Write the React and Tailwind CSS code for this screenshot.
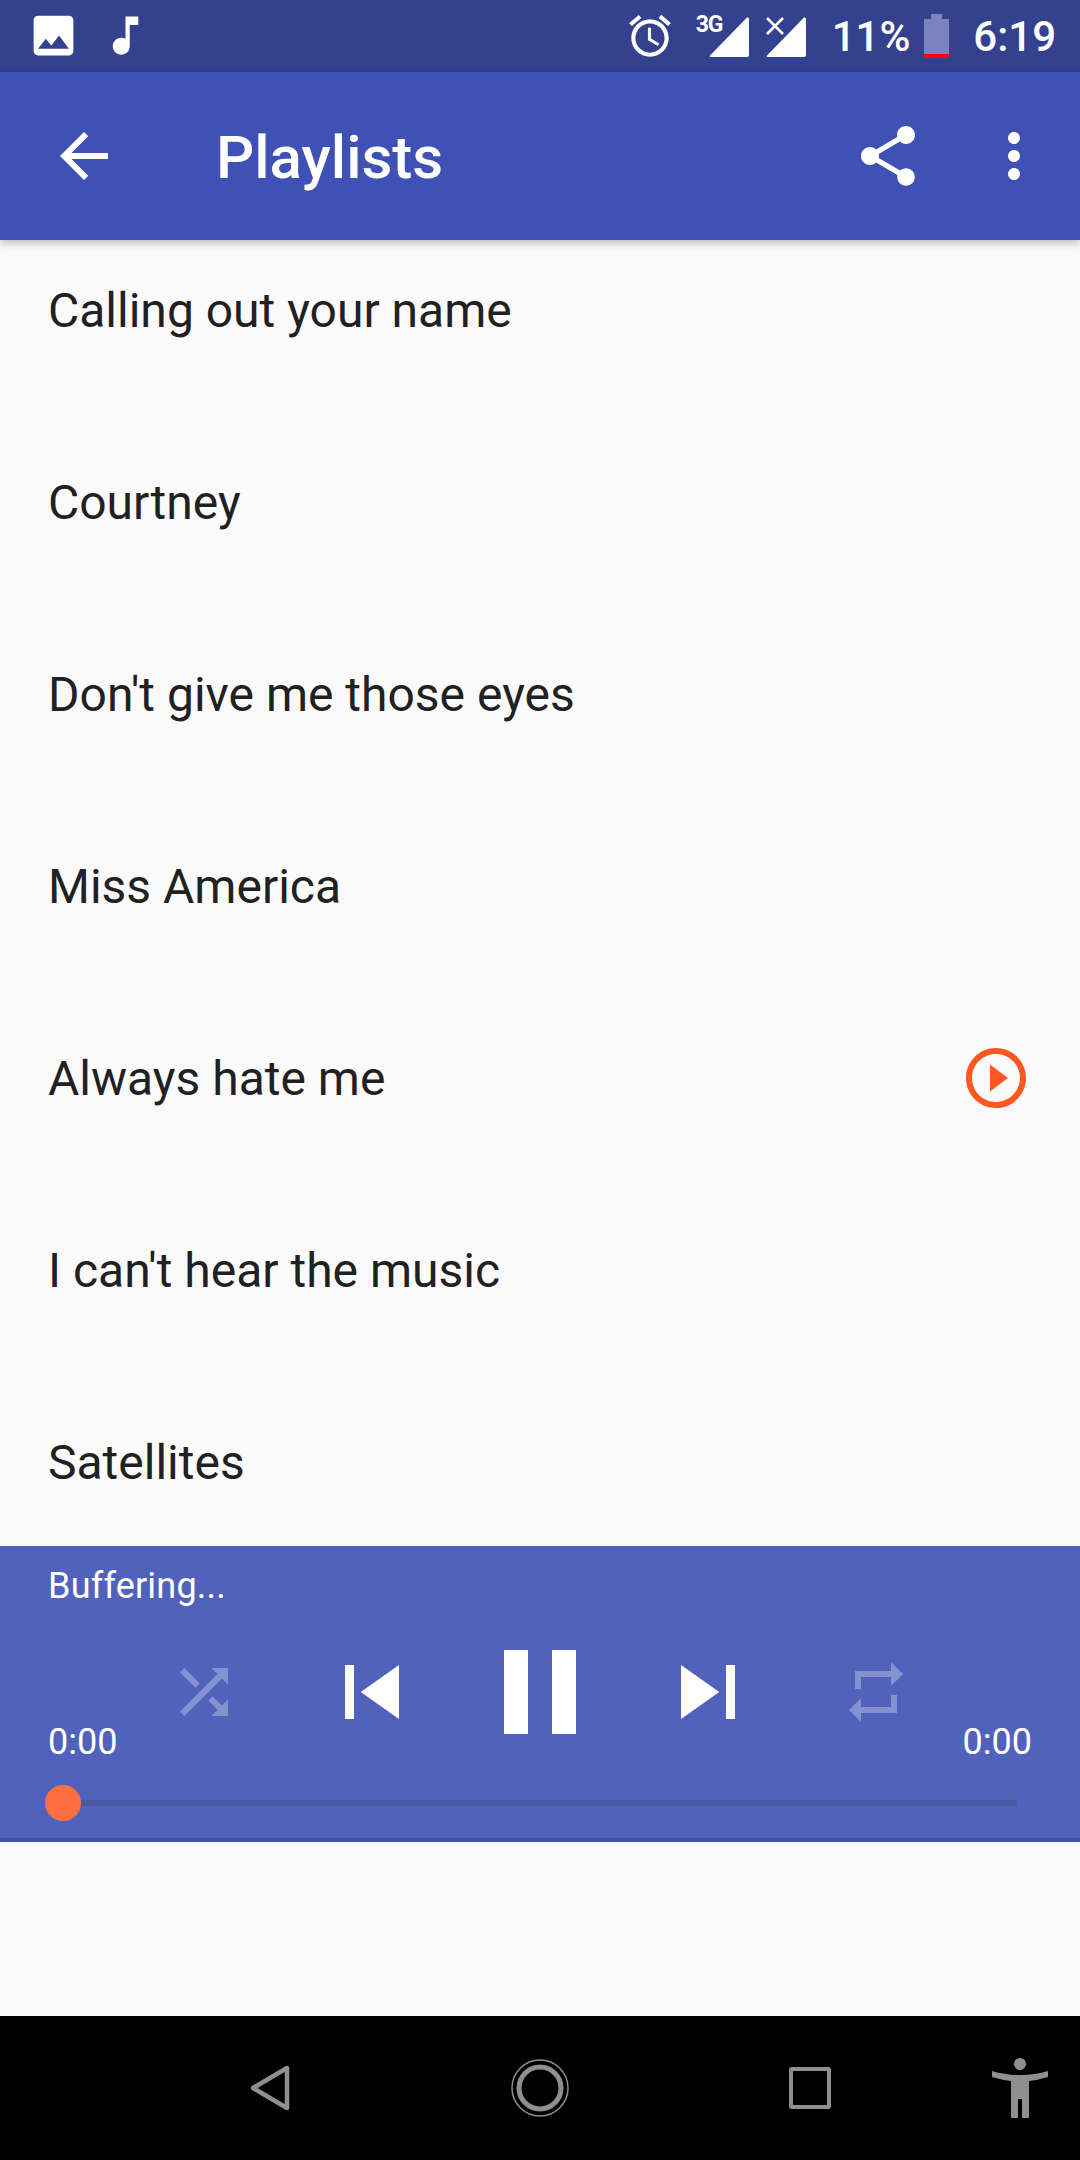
const songs = [
  "Calling out your name",
  "Courtney",
  "Don't give me those eyes",
  "Miss America",
  "Always hate me",
  "I can't hear the music",
  "Satellites",
];

// material icon paths
const paths = {
  photo: "M21 19V5c0-1.1-.9-2-2-2H5c-1.1 0-2 .9-2 2v14c0 1.1.9 2 2 2h14c1.1 0 2-.9 2-2zM8.5 13.5l2.5 3.01L14.5 12l4.5 6H5l3.5-4.5z",
  note: "M12 3v10.55c-.59-.34-1.27-.55-2-.55-2.21 0-4 1.79-4 4s1.79 4 4 4 4-1.79 4-4V7h4V3h-6z",
  alarm: "M22 5.72l-4.6-3.86-1.29 1.53 4.6 3.86L22 5.72zM7.88 3.39L6.6 1.86 2 5.71l1.29 1.53 4.59-3.85zM12.5 8H11v6l4.75 2.85.75-1.23-4-2.37V8zM12 4c-4.97 0-9 4.03-9 9s4.03 9 9 9 9-4.03 9-9-4.03-9-9-9zm0 16c-3.87 0-7-3.13-7-7s3.13-7 7-7 7 3.13 7 7-3.13 7-7 7z",
  back: "M20 11H7.83l5.59-5.59L12 4l-8 8 8 8 1.41-1.41L7.83 13H20v-2z",
  share: "M18 16.08c-.76 0-1.44.3-1.96.77L8.91 12.7c.05-.23.09-.46.09-.7s-.04-.47-.09-.7l7.05-4.11c.54.5 1.25.81 2.04.81 1.66 0 3-1.34 3-3s-1.34-3-3-3-3 1.34-3 3c0 .24.04.47.09.7L8.04 9.81C7.5 9.31 6.79 9 6 9c-1.66 0-3 1.34-3 3s1.34 3 3 3c.79 0 1.5-.31 2.04-.81l7.12 4.16c-.05.21-.08.43-.08.65 0 1.61 1.31 2.92 2.92 2.92 1.61 0 2.92-1.31 2.92-2.92s-1.31-2.92-2.92-2.92z",
  more: "M12 8c1.1 0 2-.9 2-2s-.9-2-2-2-2 .9-2 2 .9 2 2 2zm0 2c-1.1 0-2 .9-2 2s.9 2 2 2 2-.9 2-2-.9-2-2-2zm0 6c-1.1 0-2 .9-2 2s.9 2 2 2 2-.9 2-2-.9-2-2-2z",
  playOutline: "M10 16.5l6-4.5-6-4.5v9zM12 2C6.48 2 2 6.48 2 12s4.48 10 10 10 10-4.48 10-10S17.52 2 12 2zm0 18c-4.41 0-8-3.59-8-8s3.59-8 8-8 8 3.59 8 8-3.59 8-8 8z",
  shuffle: "M10.59 9.17L5.41 4 4 5.41l5.17 5.17 1.42-1.41zM14.5 4l2.04 2.04L4 18.59 5.41 20 17.96 7.46 20 9.5V4h-5.5zm.33 9.41l-1.41 1.41 3.13 3.13L14.5 20H20v-5.5l-2.04 2.04-3.13-3.13z",
  prev: "M6 6h2v12H6zm3.5 6l8.5 6V6z",
  pause: "M6 19h4V5H6v14zm8-14v14h4V5h-4z",
  next: "M6 18l8.5-6L6 6v12zM16 6v12h2V6h-2z",
  repeat: "M7 7h10v3l4-4-4-4v3H5v6h2V7zm10 10H7v-3l-4 4 4 4v-3h12v-6h-2v4z",
};

const Icon = ({ d, className }) => (
  <svg viewBox="0 0 24 24" fill="currentColor" className={className}>
    <path d={d} />
  </svg>
);

const Signal = () => (
  <svg viewBox="0 0 40 40" fill="white" className="w-10 h-10">
    <path d="M38 0.5 Q40 0 40 2 V38 Q40 40 38 40 H2 Q0 40 1 38.5 Z" />
  </svg>
);

const StatusBar = () => (
  <div className="h-[72px] bg-[#34418f] flex items-center text-white shrink-0">
    <Icon d={paths.photo} className="w-[53px] h-[53px] ml-[27px] -mt-[1px]" />
    <Icon d={paths.note} className="w-[51px] h-[51px] ml-[20px] -mt-[1px]" />
    <div className="flex-1" />
    <Icon d={paths.alarm} className="w-[50px] h-[50px] -mt-[1px]" />
    <div className="relative ml-[34px] mt-[2px]">
      <Signal />
      <span className="absolute -left-[13px] -top-[5px] text-[23px] leading-[26px] font-bold tracking-[-1px]">3G</span>
    </div>
    <div className="relative ml-[17px] mt-[2px]">
      <Signal />
      <svg viewBox="0 0 18 18" className="absolute left-0 top-0 w-[18px] h-[18px]" stroke="white" strokeWidth="2.5">
        <path d="M1 1 L17 17 M17 1 L1 17" />
      </svg>
    </div>
    <span className="ml-[26px] mt-[2px] text-[42px] leading-none font-medium">11%</span>
    <svg viewBox="0 0 25 44" className="w-[25px] h-[44px] ml-[14px]">
      <path d="M7 0 H18 V5 H25 V44 H0 V5 H7 Z" fill="#7a83bd" />
      <rect x="0" y="40" width="25" height="4" fill="#ff0000" />
    </svg>
    <span className="ml-[24px] mr-[24px] mt-[2px] text-[42px] leading-none font-medium">6:19</span>
  </div>
);

const AppBar = () => (
  <div className="relative z-10 h-[168px] bg-[#3f51b5] flex items-center text-white shrink-0 shadow-[0_3px_8px_rgba(0,0,0,0.25)]">
    <Icon d={paths.back} className="w-[72px] h-[72px] ml-[48px]" />
    <h1 className="ml-[96px] pt-[4px] flex-1 text-[60px] leading-none font-medium">Playlists</h1>
    <Icon d={paths.share} className="w-[72px] h-[72px]" />
    <Icon d={paths.more} className="w-[72px] h-[72px] ml-[54px] mr-[30px]" />
  </div>
);

const SongList = () => (
  <div className="h-[1306px] overflow-hidden shrink-0">
    <div className="-mt-[26px]">
      {songs.map((song) => (
        <div key={song} className="h-[192px] flex items-center justify-between px-[48px]">
          <span className="pt-[2px] text-[48px] leading-none text-[#212121]">{song}</span>
          {song === "Always hate me" && (
            <Icon d={paths.playOutline} className="w-[72px] h-[72px] text-[#ff5722]" />
          )}
        </div>
      ))}
    </div>
  </div>
);

const Player = () => (
  <div className="h-[296px] bg-[#5162bc] border-b-4 border-[#44529f] text-white shrink-0">
    <p className="pl-[48px] pt-[19px] text-[36px] leading-[42px] tracking-[0.2px]">Buffering...</p>
    <div className="mt-[13px] px-[120px] grid grid-cols-5 h-[144px] items-center justify-items-center">
      <Icon d={paths.shuffle} className="w-[72px] h-[72px] opacity-30" />
      <Icon d={paths.prev} className="w-[108px] h-[108px]" />
      <Icon d={paths.pause} className="w-[144px] h-[144px]" />
      <Icon d={paths.next} className="w-[108px] h-[108px]" />
      <Icon d={paths.repeat} className="w-[72px] h-[72px] opacity-30" />
    </div>
    <div className="-mt-[43px] px-[48px] flex justify-between text-[36px] leading-[42px]">
      <span>0:00</span>
      <span>0:00</span>
    </div>
    <div className="relative mt-[37px] mx-[63px] h-[6px] bg-[#4a5a9f]">
      <div className="absolute -left-[18px] -top-[15px] w-[36px] h-[36px] rounded-full bg-[#ff6e40]" />
    </div>
  </div>
);

const NavBar = () => (
  <div className="h-[144px] bg-black flex items-center pl-[135px] shrink-0">
    <div className="w-[270px] flex justify-center">
      <svg viewBox="0 0 40 46" className="w-[40px] h-[46px]" fill="none" stroke="#8f8f8f" strokeWidth="4.5" strokeLinejoin="round">
        <path d="M37 3 V43 L3 23 Z" />
      </svg>
    </div>
    <div className="w-[270px] flex justify-center">
      <svg viewBox="0 0 58 58" className="w-[58px] h-[58px]" fill="none" stroke="#8f8f8f">
        <circle cx="29" cy="29" r="21" strokeWidth="5" />
        <circle cx="29" cy="29" r="28" strokeWidth="1.5" />
      </svg>
    </div>
    <div className="w-[270px] flex justify-center">
      <div className="w-[42px] h-[42px] rounded-[3px] border-[4px] border-[#8f8f8f]" />
    </div>
    <svg viewBox="0 0 60 60" className="w-[60px] h-[60px] ml-[45px]" fill="#8f8f8f">
      <ellipse cx="30" cy="6" rx="6" ry="6" />
      <path d="M2 13 Q15 17 30 17 Q45 17 58 13 L58 19 Q48 22 39 23 V60 H32 V41 H28 V60 H21 V23 Q12 22 2 19 Z" />
    </svg>
  </div>
);

export default function App() {
  return (
    <div className="w-[1080px] h-[2160px] bg-[#fafafa] flex flex-col overflow-hidden font-['Roboto',sans-serif]">
      <StatusBar />
      <AppBar />
      <SongList />
      <Player />
      <div className="flex-1" />
      <NavBar />
    </div>
  );
}
